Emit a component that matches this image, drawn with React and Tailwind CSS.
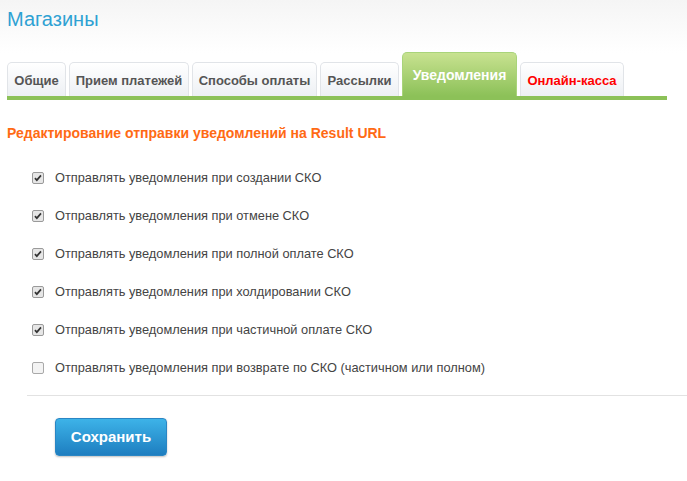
const TABS = [
  { label: 'Общие', w: 'w-[59px]' },
  { label: 'Прием платежей', w: 'w-[120px]' },
  { label: 'Способы оплаты', w: 'w-[125px]' },
  { label: 'Рассылки', w: 'w-[79px]' },
  { label: 'Уведомления', w: 'w-[115px]', active: true },
  { label: 'Онлайн-касса', w: 'w-[104px]', red: true },
];

const OPTIONS = [
  { label: 'Отправлять уведомления при создании СКО', checked: true },
  { label: 'Отправлять уведомления при отмене СКО', checked: true },
  { label: 'Отправлять уведомления при полной оплате СКО', checked: true },
  { label: 'Отправлять уведомления при холдировании СКО', checked: true },
  { label: 'Отправлять уведомления при частичной оплате СКО', checked: true },
  { label: 'Отправлять уведомления при возврате по СКО (частичном или полном)', checked: false },
];

function Tab({ tab }) {
  if (tab.active) {
    return (
      <div
        className={`${tab.w} h-[44px] rounded-t-[5px] bg-gradient-to-b from-[#c8e290] to-[#8cc158] text-white font-bold text-[14px] flex items-start justify-center pt-[12px] border border-b-0 border-[#a9d47a]`}
      >
        {tab.label}
      </div>
    );
  }
  return (
    <div
      className={`${tab.w} h-[34px] rounded-t-[5px] border border-b-0 border-[#e1e4e8] bg-gradient-to-b from-white to-[#edf0f4] text-[13px] font-bold flex items-center justify-center pt-[3px] ${
        tab.red ? 'text-[#ff0000]' : 'text-[#555]'
      }`}
    >
      {tab.label}
    </div>
  );
}

function CheckRow({ option }) {
  return (
    <label className="flex items-center h-[38px] pl-[32px]">
      <span
        className={`w-[12px] h-[12px] rounded-[2px] border flex items-center justify-center ${
          option.checked ? 'border-[#9a9a9a] bg-[#e6e6e6]' : 'border-[#a9a9a9] bg-[#f3f3f3]'
        }`}
      >
        {option.checked && (
          <svg viewBox="0 0 12 12" className="w-[10px] h-[10px]">
            <path d="M2.3 6.2 L4.6 8.6 L9.6 2.8" fill="none" stroke="#333" strokeWidth="2" />
          </svg>
        )}
      </span>
      <span className="ml-[11px] text-[12.8px] text-[#444]">{option.label}</span>
    </label>
  );
}

export default function App() {
  return (
    <div
      className="w-[687px] h-[481px] overflow-hidden bg-white"
      style={{ fontFamily: '"Liberation Sans", Arial, sans-serif' }}
    >
      <div className="bg-gradient-to-b from-[#f5f5f5] to-white h-[53px] pl-[7px] pt-[5px]">
        <h1 className="text-[20px] text-[#2ea1d3] leading-[28px]">Магазины</h1>
      </div>

      <div className="pl-[7px] pr-[20px]">
        <div className="flex items-end gap-[3px] h-[43px]">
          {TABS.map((tab) => (
            <Tab key={tab.label} tab={tab} />
          ))}
        </div>
        <div className="h-[4px] bg-[#8cc158]" />
      </div>

      <h2 className="pl-[7px] mt-[24px] text-[14px] font-bold text-[#ff6a14] leading-[18px]">
        Редактирование отправки уведомлений на Result URL
      </h2>

      <div className="mt-[17px]">
        {OPTIONS.map((o) => (
          <CheckRow key={o.label} option={o} />
        ))}
      </div>

      <div className="ml-[27px] mt-[8px] border-t border-[#e2e2e2]" />

      <div className="pl-[55px] pt-[22px]">
        <button className="w-[112px] h-[38px] rounded-[4px] bg-gradient-to-b from-[#3db3e8] to-[#1e7ec0] border border-[#2a86c4] text-white text-[15px] font-bold shadow-[0_1px_2px_rgba(0,0,0,0.25)]">
          Сохранить
        </button>
      </div>
    </div>
  );
}
